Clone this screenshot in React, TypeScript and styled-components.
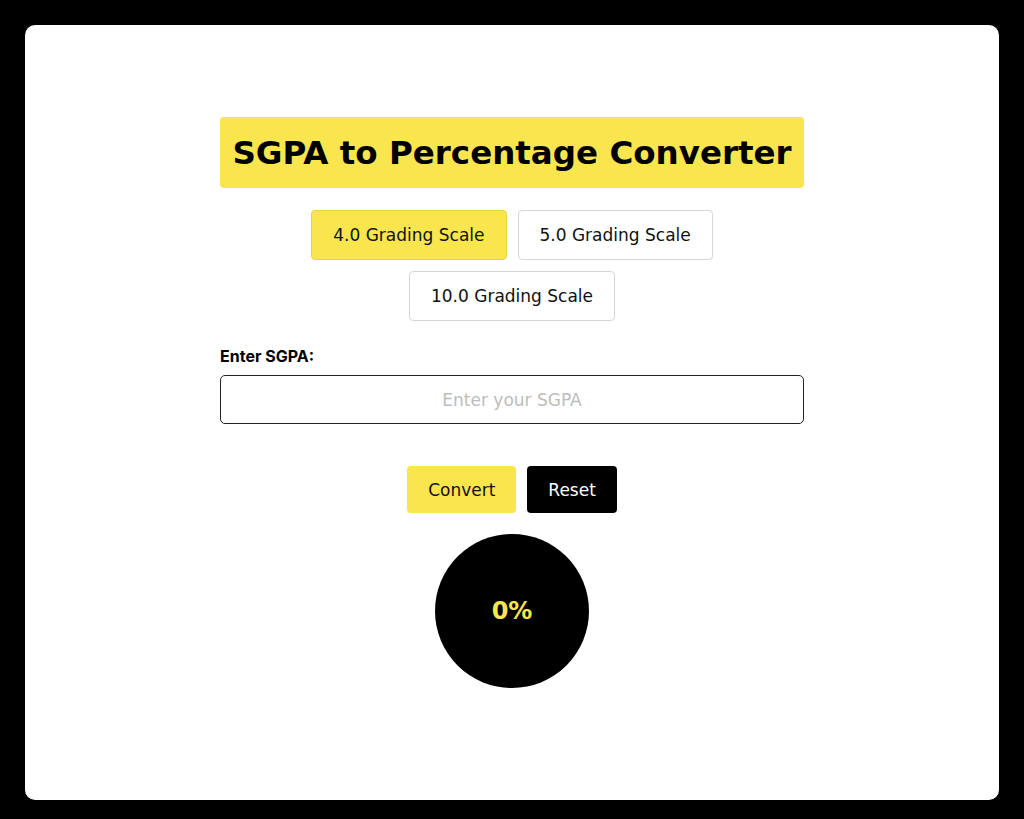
import React, { useState } from "react";
import styled, { createGlobalStyle } from "styled-components";

const Global = createGlobalStyle`
  html, body { margin: 0; padding: 0; background: #000; }
  body { font-family: "DejaVu Sans", "Open Sans", sans-serif; }
  * { box-sizing: border-box; }
`;

const Page = styled.div`
  padding: 25px;
  height: 819px;
`;

const Card = styled.main`
  background: #fff;
  border-radius: 10px;
  height: 775px;
  display: flex;
  justify-content: center;
  padding-top: 92px;
`;

const Column = styled.div`
  width: 584px;
  display: flex;
  flex-direction: column;
  align-items: center;
`;

const Title = styled.h1`
  margin: 0;
  width: 100%;
  height: 71px;
  background: #f9e54e;
  border-radius: 4px;
  display: flex;
  align-items: center;
  justify-content: center;
  font-size: 32.5px;
  font-weight: 700;
  color: #000;
`;

const ScaleGroup = styled.div`
  margin-top: 22px;
  display: flex;
  flex-wrap: wrap;
  justify-content: center;
  gap: 11px;
  width: 420px;
`;

const ScaleButton = styled.button<{ $active: boolean }>`
  height: 50px;
  padding: 0 21px;
  font-family: inherit;
  font-size: 17px;
  color: #111;
  background: ${(p) => (p.$active ? "#f9e54e" : "#fff")};
  border: 1px solid ${(p) => (p.$active ? "#e6d34a" : "#d6d6d6")};
  border-radius: 4px;
  cursor: pointer;
`;

const Field = styled.div`
  margin-top: 25px;
  width: 100%;
  display: flex;
  flex-direction: column;
  gap: 9px;
`;

const Label = styled.label`
  font-family: Inter, "DejaVu Sans", sans-serif;
  font-size: 16px;
  line-height: 20px;
  font-weight: 700;
  color: #000;
`;

const Input = styled.input`
  width: 100%;
  height: 49px;
  border: 1px solid #222;
  border-radius: 5px;
  font-family: inherit;
  font-size: 17px;
  text-align: center;
  outline: none;
  &::placeholder { color: #bdbdbd; }
`;

const Actions = styled.div`
  margin-top: 42px;
  display: flex;
  gap: 11px;
`;

const ActionButton = styled.button<{ $dark?: boolean }>`
  height: 47px;
  padding: 0 21px;
  border: none;
  border-radius: 4px;
  font-family: inherit;
  font-size: 17px;
  background: ${(p) => (p.$dark ? "#000" : "#f9e54e")};
  color: ${(p) => (p.$dark ? "#fff" : "#111")};
  cursor: pointer;
`;

const Result = styled.div`
  margin-top: 21px;
  width: 154px;
  height: 154px;
  border-radius: 50%;
  background: #000;
  color: #f9e54e;
  display: flex;
  align-items: center;
  justify-content: center;
  font-size: 24px;
  font-weight: 700;
`;

export default function App() {
  const [scale, setScale] = useState("4.0");
  const [value, setValue] = useState("");
  const [pct, setPct] = useState(0);
  const convert = () => {
    const v = parseFloat(value);
    if (isNaN(v)) return setPct(0);
    const max = parseFloat(scale);
    setPct(Math.round((v / max) * 100));
  };
  return (
    <Page>
      <Global />
      <Card>
        <Column>
          <Title>SGPA to Percentage Converter</Title>
          <ScaleGroup>
            {["4.0", "5.0", "10.0"].map((s) => (
              <ScaleButton key={s} $active={scale === s} onClick={() => setScale(s)}>
                {s} Grading Scale
              </ScaleButton>
            ))}
          </ScaleGroup>
          <Field>
            <Label htmlFor="sgpa">Enter SGPA:</Label>
            <Input id="sgpa" placeholder="Enter your SGPA" value={value} onChange={(e) => setValue(e.target.value)} />
          </Field>
          <Actions>
            <ActionButton onClick={convert}>Convert</ActionButton>
            <ActionButton $dark onClick={() => { setValue(""); setPct(0); }}>Reset</ActionButton>
          </Actions>
          <Result>{pct}%</Result>
        </Column>
      </Card>
    </Page>
  );
}
